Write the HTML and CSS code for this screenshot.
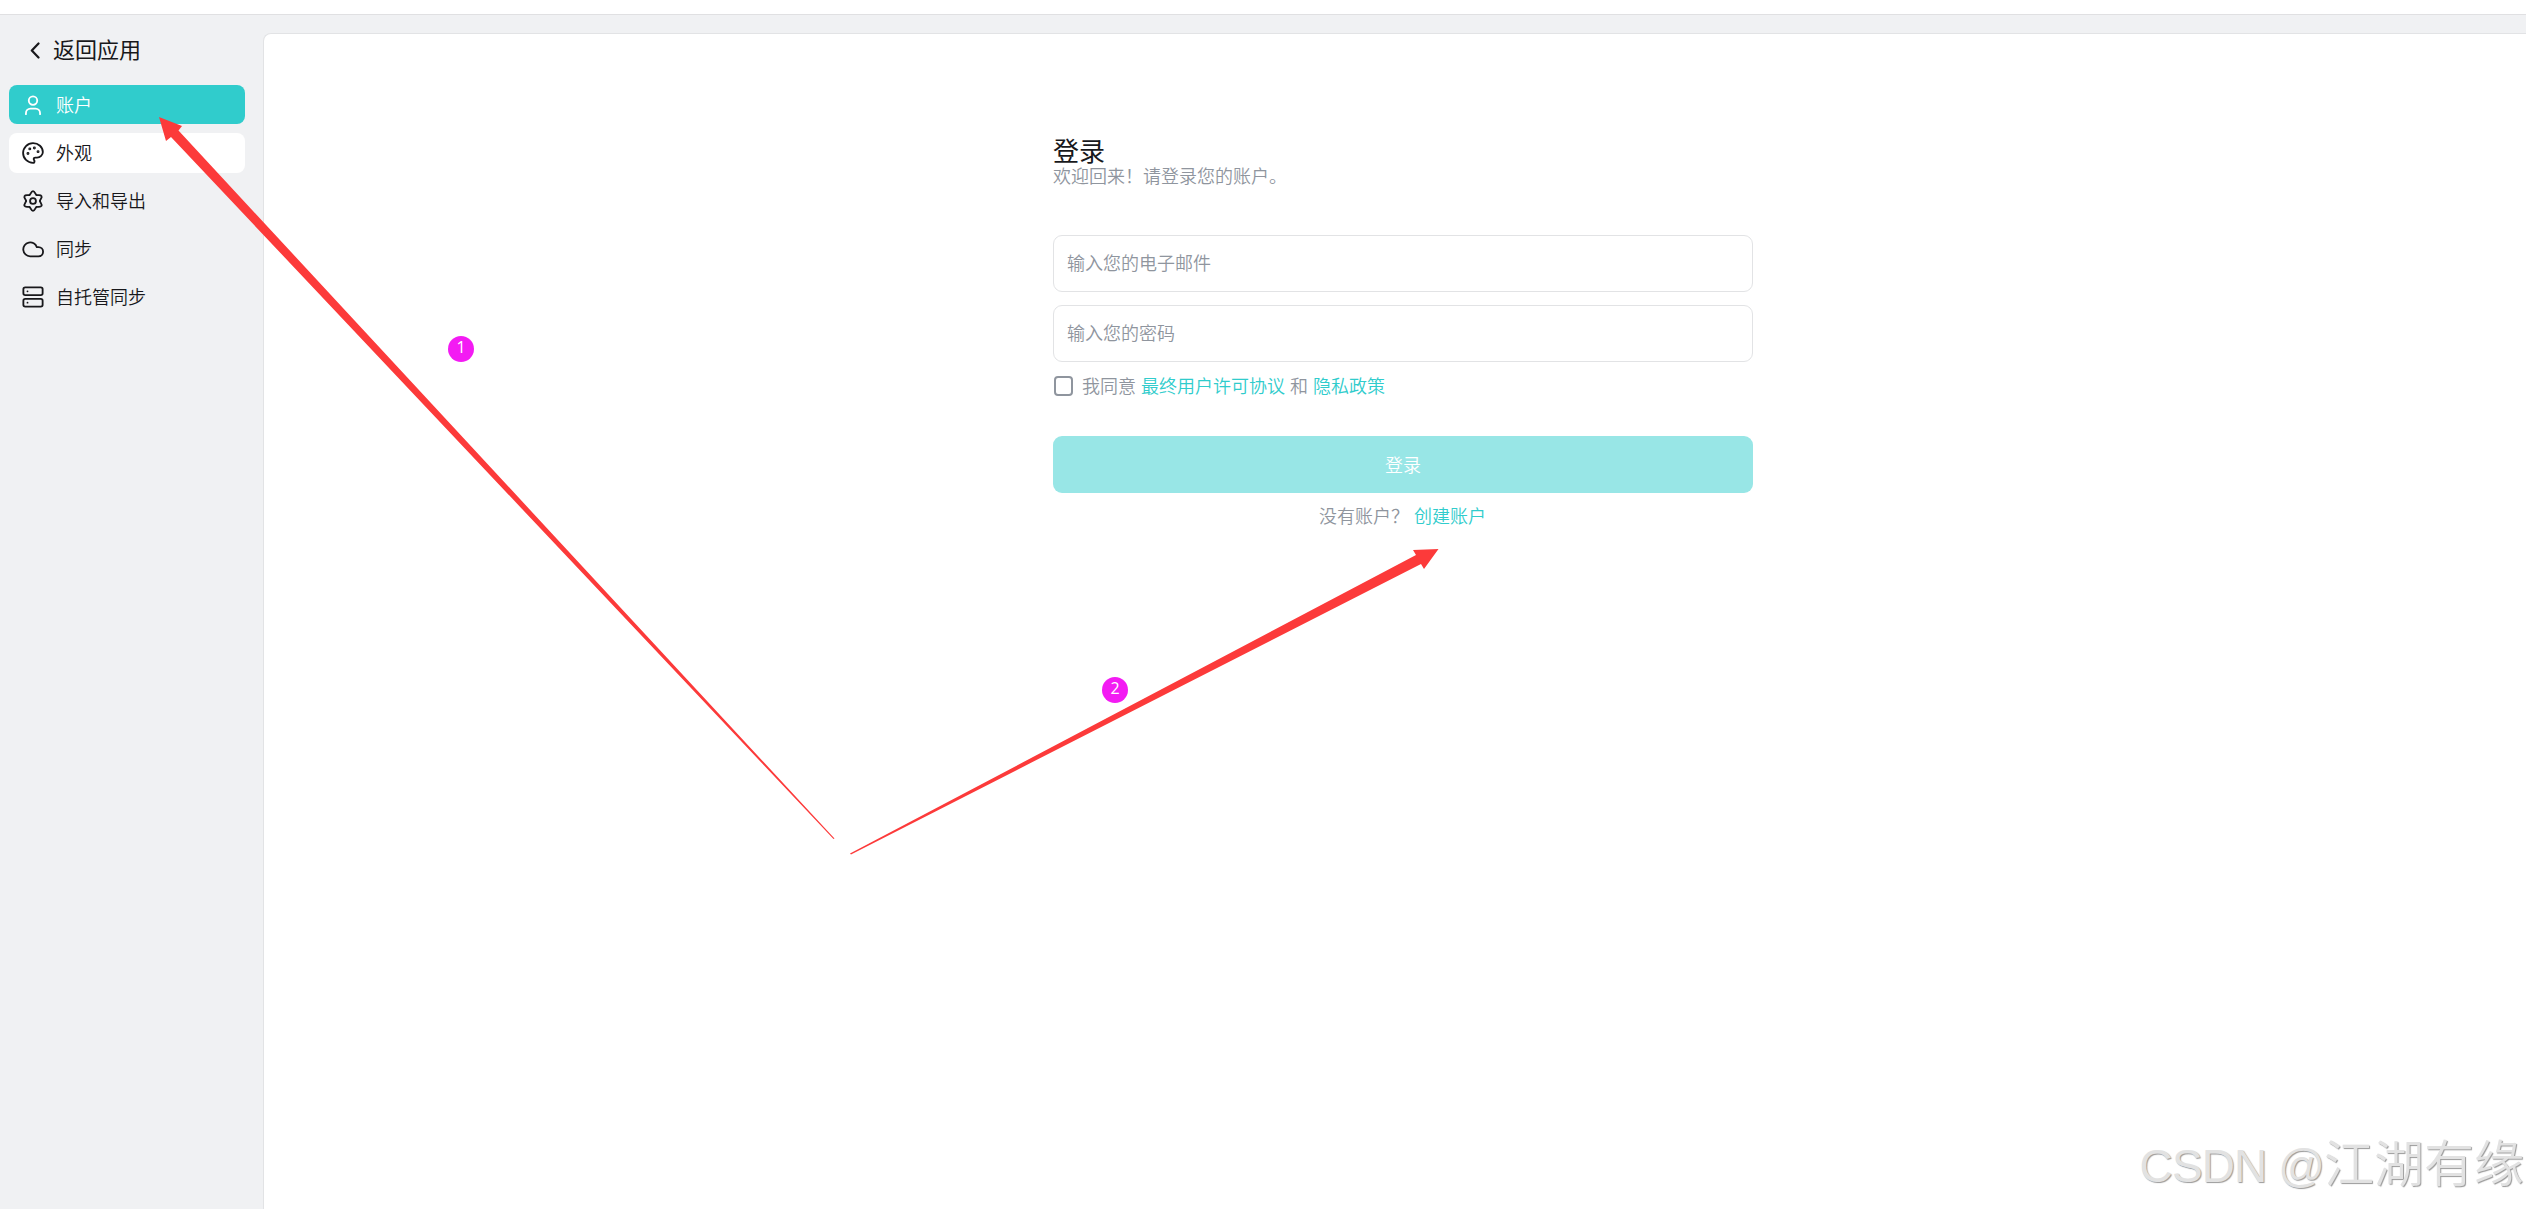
FILE: index.html
```html
<!DOCTYPE html>
<html lang="zh-CN">
<head>
    <meta charset="UTF-8">
    <meta name="viewport" content="width=device-width, initial-scale=1.0">
    <title>登录</title>
    <link rel="stylesheet" href="styles.css">
</head>
<body>
    <div class="title-bar"></div>

    <div class="app">
        <aside class="sidebar">
            <a class="back" href="#">
                <svg class="back-icon" viewBox="0 0 10 17"><path d="M8.5 1.5 L1.8 8.5 L8.5 15.5"/></svg>
                <span>返回应用</span>
            </a>

            <nav class="menu">
                <a class="menu-item active" href="#">
                    <svg class="icon" viewBox="0 0 24 24"><circle cx="12" cy="7.2" r="4.6"/><path d="M4.3 22v-1a5 5 0 0 1 5-5h5.4a5 5 0 0 1 5 5v1"/></svg>
                    <span>账户</span>
                </a>
                <a class="menu-item hover" href="#">
                    <svg class="icon" viewBox="0 0 24 24"><circle class="dot" cx="13.5" cy="6.5" r=".6"/><circle class="dot" cx="17.5" cy="10.5" r=".6"/><circle class="dot" cx="8.5" cy="7.5" r=".6"/><circle class="dot" cx="6.5" cy="12.5" r=".6"/><path d="M12 1.300C6 1.300 1.200 6 1.200 12s4.800 10.700 10.800 10.700c1 0 1.648-.8 1.648-1.788 0-.437-.18-.835-.437-1.125-.29-.289-.438-.652-.438-1.125a1.640 1.640 0 0 1 1.668-1.668h1.996c3.500 0 6.300-2.700 6.300-6C22.700 5.500 18 1.300 12 1.300z"/></svg>
                    <span>外观</span>
                </a>
                <a class="menu-item" href="#">
                    <svg class="icon" viewBox="0 0 24 24">
                        <path id="tooth" d="M8.2 5.4C9.6 4.6 9.8 1.300 12 1.300S14.4 4.600 15.800 5.400"/>
                        <use href="#tooth" transform="rotate(60 12 12)"/>
                        <use href="#tooth" transform="rotate(120 12 12)"/>
                        <use href="#tooth" transform="rotate(180 12 12)"/>
                        <use href="#tooth" transform="rotate(240 12 12)"/>
                        <use href="#tooth" transform="rotate(300 12 12)"/>
                        <circle cx="12" cy="12" r="3.2"/>
                    </svg>
                    <span>导入和导出</span>
                </a>
                <a class="menu-item" href="#">
                    <svg class="icon" viewBox="0 0 24 24"><path d="M18 20H8.800a7.600 7.600 0 1 1 7.400-10H18a5 5 0 1 1 0 10z"/></svg>
                    <span>同步</span>
                </a>
                <a class="menu-item" href="#">
                    <svg class="icon" viewBox="0 0 24 24"><rect x="1.5" y="1.5" width="21" height="8.5" rx="2"/><rect x="1.5" y="14" width="21" height="8.5" rx="2"/><path d="M6 5.800h.01M6 18.200h.01"/></svg>
                    <span>自托管同步</span>
                </a>
            </nav>
        </aside>

        <main class="content">
            <form class="login-form">
                <h1>登录</h1>
                <p class="subtitle">欢迎回来！请登录您的账户。</p>
                <input class="field" type="email" placeholder="输入您的电子邮件">
                <input class="field" type="password" placeholder="输入您的密码">
                <label class="agree">
                    <input class="checkbox" type="checkbox">
                    <span>我同意 <a href="#">最终用户许可协议</a> 和 <a href="#">隐私政策</a></span>
                </label>
                <button class="btn-login" type="button">登录</button>
                <div class="signup">
                    <span>没有账户？</span>
                    <a href="#">创建账户</a>
                </div>
            </form>
        </main>
    </div>

    <svg class="arrows" viewBox="0 0 2526 1209">
        <polygon points="159,117 182,126 178.5,130.5 834.5,838.5 833.5,839 171,137 166,141"/>
        <polygon points="1438.5,549 1424,569 1421,564 851,854.5 850,853.5 1416,555 1413,550"/>
    </svg>
    <div class="step step-one">1</div>
    <div class="step step-two">2</div>
    <div class="watermark"><span class="site">CSDN @</span>江湖有缘</div>
</body>
</html>
```

FILE: styles.css
```css
* {
    box-sizing: border-box;
}

body {
    margin: 0;
    height: 100vh;
    display: flex;
    flex-direction: column;
    overflow: hidden;
    position: relative;
    font-family: "Liberation Sans", "Noto Sans CJK SC", sans-serif;
    font-size: 18px;
    font-weight: 350;
    color: #18181b;
    background-color: #f0f1f3;
}

a {
    color: #30cccc;
    text-decoration: none;
}

.title-bar {
    height: 15px;
    flex: none;
    background-color: #fff;
    border-bottom: 1px solid #e0e0e2;
}

.app {
    flex: 1;
    display: flex;
}

.sidebar {
    width: 263px;
    padding: 17px 18px 0 9px;
}

.back {
    display: flex;
    align-items: center;
    gap: 13px;
    height: 36px;
    padding-left: 21px;
    font-size: 22px;
    font-weight: 400;
    color: #18181b;
}

.back span {
    padding-bottom: 4px;
}

.back-icon {
    width: 10px;
    height: 17px;
    fill: none;
    stroke: #18181b;
    stroke-width: 2.2;
    stroke-linecap: round;
    stroke-linejoin: round;
}

.menu {
    display: flex;
    flex-direction: column;
    gap: 8px;
    margin-top: 17px;
}

.menu-item {
    display: flex;
    align-items: center;
    gap: 12px;
    height: 40px;
    padding-left: 13px;
    border-radius: 8px;
    color: #18181b;
}

.menu-item span {
    padding-bottom: 2px;
}

.menu-item.active {
    height: 39px;
    margin-bottom: 1px;
    background-color: #30cccc;
    color: #fff;
}

.menu-item.hover {
    background-color: #fff;
}

.icon {
    width: 22px;
    height: 22px;
    fill: none;
    stroke: currentColor;
    stroke-width: 2;
    stroke-linecap: round;
    stroke-linejoin: round;
}

.dot {
    fill: currentColor;
}

.content {
    flex: 1;
    margin-top: 18px;
    padding-top: 103px;
    background-color: #fff;
    border-top: 1px solid #e2e3e5;
    border-left: 1px solid #e2e3e5;
    border-top-left-radius: 8px;
}

.login-form {
    width: 700px;
    margin-left: 789px;
    display: flex;
    flex-direction: column;
    color: #8f959e;
}

h1 {
    margin: 0;
    font-size: 26px;
    line-height: 30px;
    font-weight: 400;
    color: #18181b;
}

.subtitle {
    margin: -1px 0 46px;
    line-height: 23px;
}

.field {
    height: 57px;
    margin-bottom: 13px;
    padding: 1px 13px 0;
    border: 1px solid #e2e3e5;
    border-radius: 9px;
    outline: none;
    font: inherit;
}

.field::placeholder {
    color: #8f959e;
}

.agree {
    display: flex;
    align-items: center;
    gap: 9px;
    height: 24px;
    margin: -1px 0 38px 1px;
}

.agree span {
    padding-bottom: 2px;
}

.checkbox {
    appearance: none;
    width: 19px;
    height: 20px;
    margin: 0;
    border: 2px solid #8f959e;
    border-radius: 4px;
}

.btn-login {
    height: 57px;
    padding-bottom: 3px;
    border: none;
    border-radius: 9px;
    background-color: #98e6e6;
    color: #fff;
    font: inherit;
}

.signup {
    display: flex;
    justify-content: center;
    gap: 5px;
    margin: 12px 1px 0 0;
    line-height: 24px;
}

.arrows {
    position: absolute;
    top: 0;
    left: 0;
    width: 2526px;
    height: 1209px;
    fill: #fc3a3a;
    pointer-events: none;
}

.step {
    position: absolute;
    width: 26px;
    height: 26px;
    border-radius: 50%;
    background-color: #f31bf3;
    color: #fff;
    font-family: "Open Sans", sans-serif;
    font-size: 16px;
    font-weight: 400;
    line-height: 23px;
    text-align: center;
}

.step-one {
    top: 336px;
    left: 448px;
}

.step-two {
    top: 677px;
    left: 1102px;
}

.watermark {
    position: absolute;
    right: 2px;
    bottom: 7px;
    font-size: 50px;
    line-height: 72px;
    white-space: nowrap;
    color: #e2e2e2;
    text-shadow: 1px 1px 1px #999;
}

.site {
    font-size: 46px;
    letter-spacing: -0.9px;
}
```
